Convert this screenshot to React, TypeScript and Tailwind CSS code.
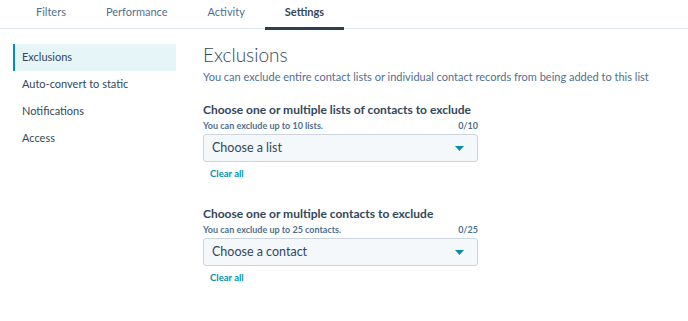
import { useState } from 'react';

const tabs = ['Filters', 'Performance', 'Activity', 'Settings'];
const navItems = ['Exclusions', 'Auto-convert to static', 'Notifications', 'Access'];

function Caret() {
    return (
        <svg width="9" height="5" viewBox="0 0 9 5" className="shrink-0">
            <path d="M0 0 H9 L4.5 5 Z" fill="#0091ae" />
        </svg>
    );
}

function ExclusionField({
    label,
    help,
    count,
    placeholder,
}: {
    label: string;
    help: string;
    count: string;
    placeholder: string;
}) {
    return (
        <div className="w-[275px]">
            <div className="text-[12px] font-bold text-[#33475b] leading-[14px] whitespace-nowrap">{label}</div>
            <div className="flex justify-between items-center mt-[3px] text-[9px] font-bold text-[#516f90] leading-[11px]">
                <span>{help}</span>
                <span>{count}</span>
            </div>
            <button className="mt-[3px] w-full h-[28px] flex items-center justify-between pl-[8px] pr-[13px] rounded-[3px] border border-[#cbd6e2] bg-[#f5f8fa] text-[12.5px] text-[#33475b]">
                <span>{placeholder}</span>
                <Caret />
            </button>
            <div className="mt-[6px] pl-[7px] text-[9.5px] font-bold text-[#0091ae] leading-[12px]">Clear all</div>
        </div>
    );
}

export default function App() {
    const [active, setActive] = useState('Exclusions');

    return (
        <div className="w-[688px] h-[321px] bg-white font-['Lato',sans-serif] text-[#33475b] overflow-hidden">
            <div className="flex h-[29px] border-b border-[#dfe3eb] pl-[16px]">
                {tabs.map((tab) => (
                    <div
                        key={tab}
                        className={`px-[20px] pt-[4px] text-[11px] ${
                            tab === 'Settings'
                                ? 'font-bold text-[#33475b] border-b-[3px] border-[#2d3e50] mb-[-2px]'
                                : 'text-[#516f90]'
                        }`}
                    >
                        {tab}
                    </div>
                ))}
            </div>

            <div className="flex">
                <aside className="w-[177px] pl-[13px] pt-[15px]">
                    {navItems.map((item) => (
                        <button
                            key={item}
                            onClick={() => setActive(item)}
                            className={`w-[163px] h-[27px] flex items-center pl-[7px] text-[11px] text-left border-l-[2px] ${
                                active === item ? 'bg-[#e5f5f8] border-[#0091ae]' : 'border-transparent'
                            }`}
                        >
                            {item}
                        </button>
                    ))}
                </aside>

                <main className="pl-[26px] pt-[14px] flex-1">
                    <h1 className="text-[19px] leading-[24px] font-light text-[#33475b]">Exclusions</h1>
                    <p className="mt-[3px] text-[11px] text-[#516f90] leading-[14px] whitespace-nowrap">
                        You can exclude entire contact lists or individual contact records from being added to this list
                    </p>
                    <div className="mt-[19px] flex flex-col gap-[27px]">
                        <ExclusionField
                            label="Choose one or multiple lists of contacts to exclude"
                            help="You can exclude up to 10 lists."
                            count="0/10"
                            placeholder="Choose a list"
                        />
                        <ExclusionField
                            label="Choose one or multiple contacts to exclude"
                            help="You can exclude up to 25 contacts."
                            count="0/25"
                            placeholder="Choose a contact"
                        />
                    </div>
                </main>
            </div>
        </div>
    );
}
